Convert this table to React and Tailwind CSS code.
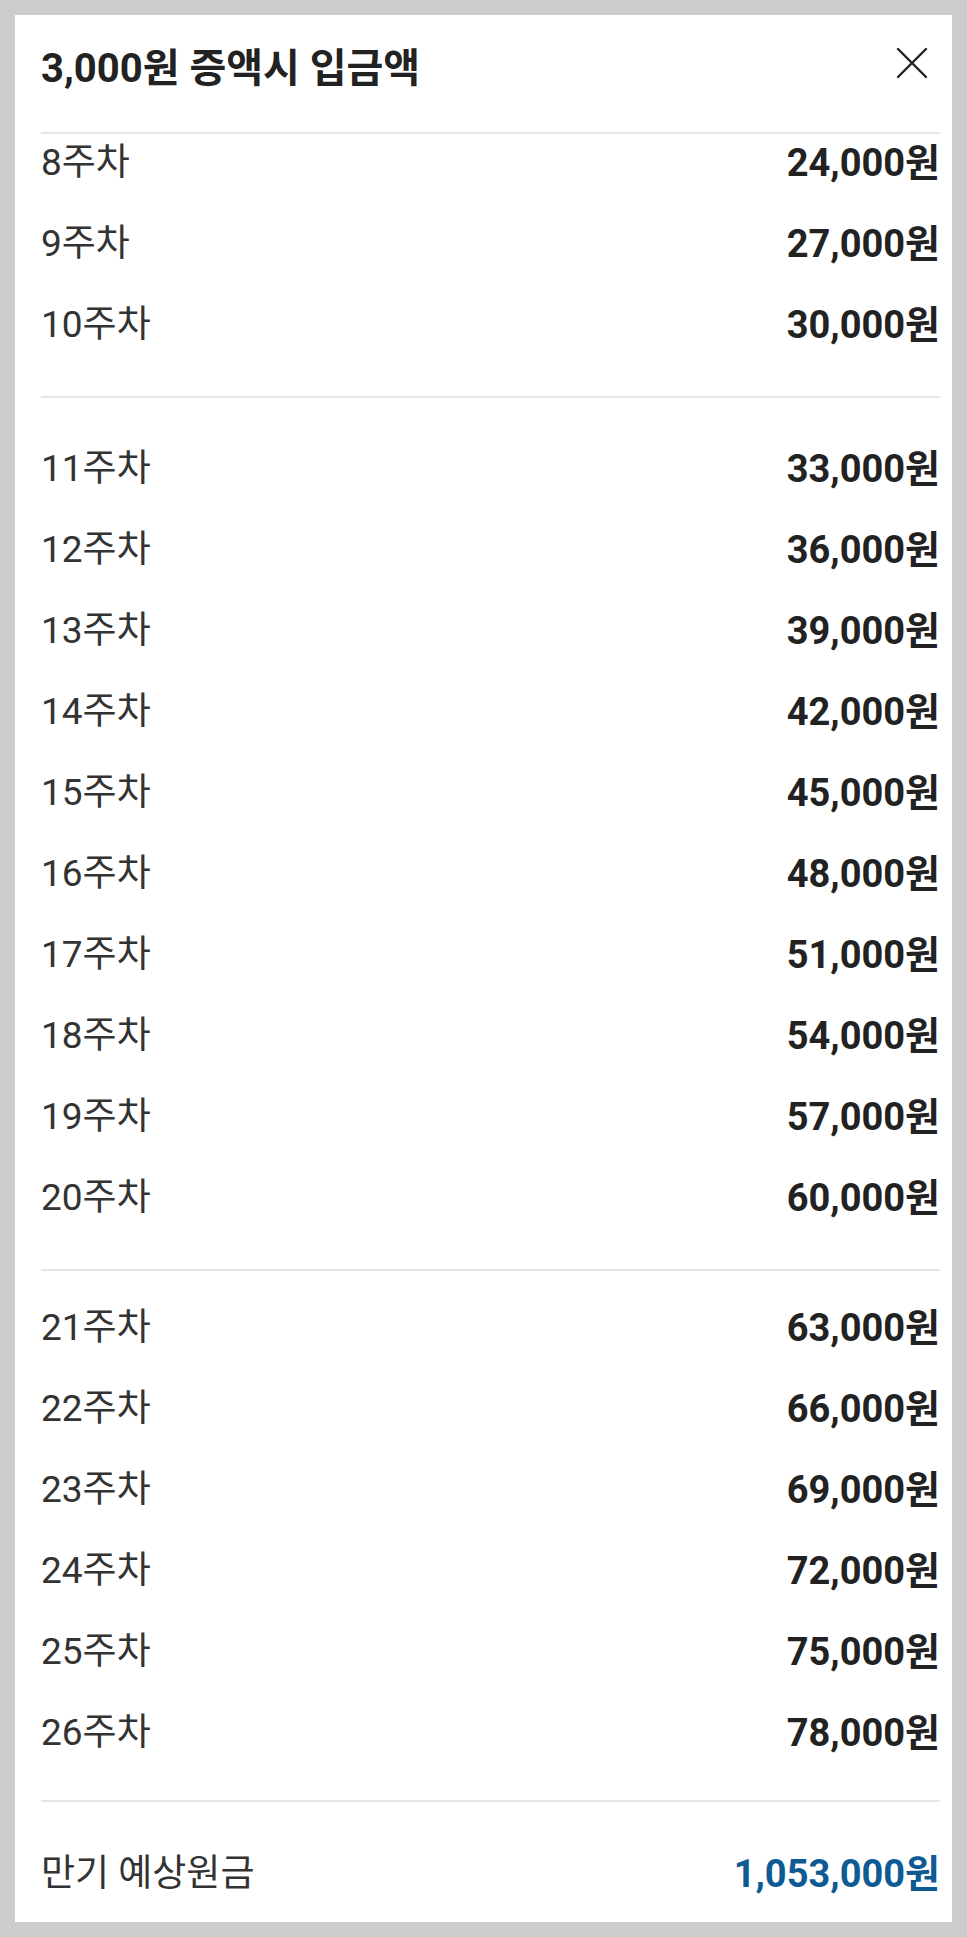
import React from "react";

const group1 = [8, 9, 10];
const group2 = [11, 12, 13, 14, 15, 16, 17, 18, 19, 20];
const group3 = [21, 22, 23, 24, 25, 26];

const fmt = (n) => n.toLocaleString("en-US") + "원";

function Row({ week }) {
  return (
    <div className="flex h-[81px] items-center justify-between pl-[26px] pr-[12px]">
      <span className="text-[37px] leading-[1.2] text-[#333333]">{week}주차</span>
      <span className="text-[38px] font-bold leading-[1.2] text-[#222222]">{fmt(week * 3000)}</span>
    </div>
  );
}

function Divider() {
  return <div className="ml-[26px] mr-[12px] h-[2px] bg-[#e6e6e6]" />;
}

export default function App() {
  return (
    <div className="min-h-[1937px] bg-[#cccccc] p-[15px] font-[Roboto,'Noto_Sans_CJK_KR',sans-serif]">
      <div className="flex h-[1907px] flex-col bg-white">
        <div className="flex h-[117px] shrink-0 items-start justify-between pl-[26px] pr-[24px] pt-[30px]">
          <h1 className="text-[40px] font-bold leading-[1.2] text-[#222222]">3,000원 증액시 입금액</h1>
          <svg width="32" height="32" viewBox="0 0 32 32" className="mt-[2px]">
            <path d="M2 2 L30 30 M30 2 L2 30" stroke="#222222" strokeWidth="2.4" strokeLinecap="round" />
          </svg>
        </div>
        <Divider />
        <div className="flex-1 overflow-hidden">
          <div className="-mt-[11px] pb-[30px]">
            {group1.map((w) => (
              <Row key={w} week={w} />
            ))}
          </div>
          <Divider />
          <div className="pb-[30px] pt-[31px]">
            {group2.map((w) => (
              <Row key={w} week={w} />
            ))}
          </div>
          <Divider />
          <div className="pb-[28px] pt-[17px]">
            {group3.map((w) => (
              <Row key={w} week={w} />
            ))}
          </div>
        </div>
        <div className="shrink-0">
          <Divider />
          <div className="flex h-[81px] items-center justify-between pl-[26px] pr-[12px] mt-[32px] mb-[7px]">
            <span className="text-[37px] leading-[1.2] text-[#333333]">만기 예상원금</span>
            <span className="text-[38px] font-bold leading-[1.2] text-[#0e5a93]">1,053,000원</span>
          </div>
        </div>
      </div>
    </div>
  );
}
